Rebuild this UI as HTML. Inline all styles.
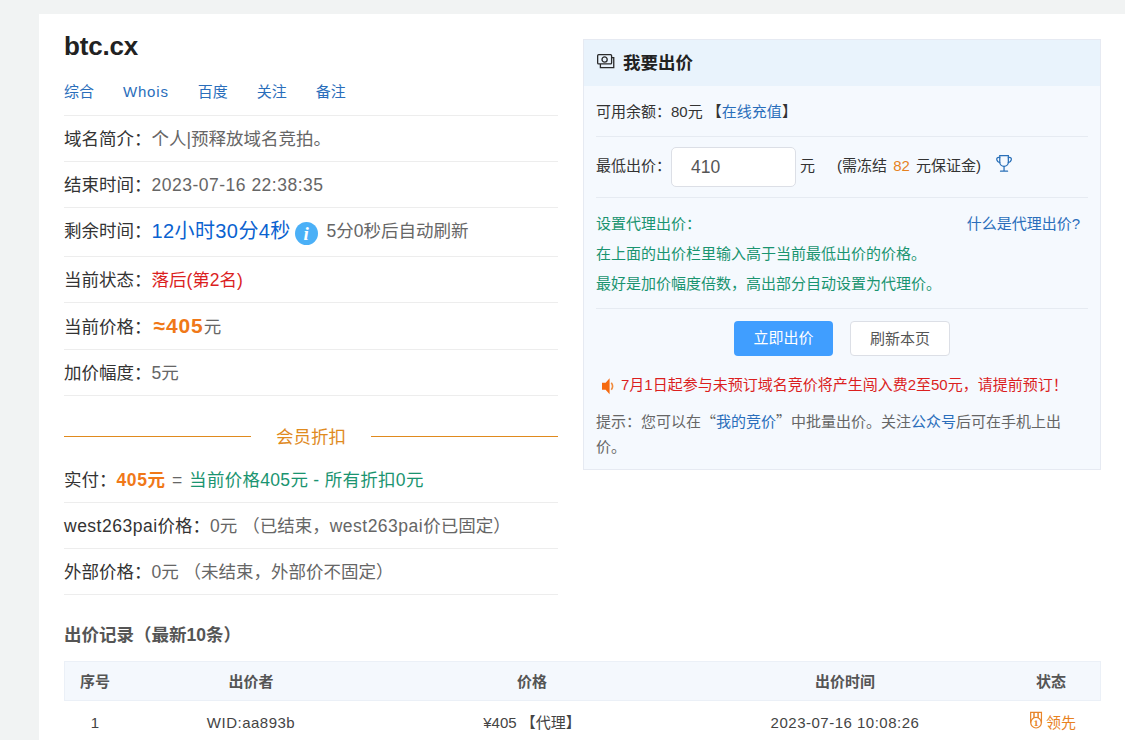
<!DOCTYPE html>
<html lang="zh-CN">
<head>
<meta charset="utf-8">
<title>btc.cx</title>
<style>
*{box-sizing:border-box;margin:0;padding:0}
html,body{width:1125px;height:740px;overflow:hidden;background:#f1f3f3}
body{font-family:"Liberation Sans","Noto Sans CJK SC",sans-serif;color:#333;position:relative}
a{color:#2a6ebb;text-decoration:none}
.wrap{position:absolute;left:39px;top:14px;width:1100px;height:740px;background:#fff}
.left{position:absolute;left:25px;top:0;width:494px}
h1{font-size:26px;font-weight:bold;color:#222;height:63px;line-height:65px;letter-spacing:-0.2px}
.links{height:39px;font-size:15px;line-height:30px;border-bottom:1px solid #ededed}
.links a{margin-right:29px}
.links a.w{letter-spacing:0.8px}
.n{letter-spacing:0.5px}
.row{height:46px;line-height:47px;font-size:17.5px;border-bottom:1px solid #ededed;color:#666;white-space:nowrap}
.row b{font-weight:normal;color:#333}
.row.t{height:49px;line-height:44px}
.row.h47{height:47px;padding-top:1px}
.blue{color:#0a62d0;font-size:20px;letter-spacing:0.4px;position:relative;top:1px}
.red{color:#db1f1f}
.org{color:#f07818;font-weight:bold;letter-spacing:0.6px}
.org.big{font-size:21px;letter-spacing:0.9px;position:relative;top:0;margin-left:2px;line-height:20px}
.grn{color:#1a9470}
.row .grn{letter-spacing:0.3px;margin-left:2px}
.row .eq{margin-left:1.500px}
.info{display:inline-block;width:23px;height:23px;border-radius:50%;background:#4bb0f7;vertical-align:-7.500px;margin:0 4px 0 -1px;position:relative}
.sep{height:61px;position:relative;text-align:center;color:#e08a1e;font-size:17.5px;line-height:82px}
.sep:before,.sep:after{content:"";position:absolute;top:40px;height:1px;background:#e08a1e;width:187px}
.sep:before{left:0}.sep:after{right:0}
.panel{position:absolute;left:544px;top:25px;width:518px;height:431px;background:#f5f9fe;border:1px solid #e6eaf2;font-size:15px}
.ph{position:absolute;left:0;top:0;right:0;height:46px;background:#e9f3fc;line-height:47px;font-size:17.5px;font-weight:bold;color:#222;padding-left:39px}
.panel .a{position:absolute;white-space:nowrap;line-height:20px}
.q{font-family:"Noto Sans CJK SC",sans-serif}
.hr{position:absolute;left:12px;width:492px;height:1px;background:#e6ebf2}
.inp{position:absolute;left:87px;top:107px;width:125px;height:40px;border:1px solid #dcdfe6;border-radius:5px;background:#fff;font-size:17.5px;color:#555;line-height:38px;padding-left:19px}
.btn{position:absolute;top:281px;width:99px;height:35px;border-radius:4px;text-align:center;line-height:34px;font-size:15px}
.b1{left:150px;background:#409eff;color:#fff}
.b2{left:266px;width:100px;background:#fff;border:1px solid #dcdfe6;color:#555}
.h2{position:absolute;left:25px;top:609px;font-size:17.5px;font-weight:bold;color:#555;line-height:24px}
.tb{position:absolute;left:25px;top:647px;width:1037px;font-size:15px}
.tb .hd{position:absolute;left:0;top:0;width:1037px;height:40px;background:#f4f8fd;border:1px solid #ebf0f7}
.tb span{position:absolute;white-space:nowrap;transform:translateX(-50%);line-height:20px}
.tb .h{font-weight:bold;color:#555;top:11px}
.tb .d{color:#444;top:51.500px}
svg{position:absolute;overflow:visible}
</style>
</head>
<body>
<div class="wrap">
 <div class="left">
  <h1>btc.cx</h1>
  <div class="links"><a>综合</a><a class="w">Whois</a><a>百度</a><a>关注</a><a>备注</a></div>
  <div class="row"><b>域名简介：</b>个人|预释放域名竞拍。</div>
  <div class="row"><b>结束时间：</b><span class="n">2023-07-16 22:38:35</span></div>
  <div class="row t"><b>剩余时间：</b><span class="blue">12小时30分4秒</span> <i class="info"><svg width="22" height="22" viewBox="0 0 22 22" style="left:0;top:0"><text x="11.200" y="18" text-anchor="middle" font-family="Liberation Serif,serif" font-style="italic" font-weight="bold" font-size="19" fill="#fff">i</text></svg></i> 5分0秒后自动刷新</div>
  <div class="row"><b>当前状态：</b><span class="red">落后(第2名)</span></div>
  <div class="row h47"><b>当前价格：</b><span class="org big">≈405</span>元</div>
  <div class="row"><b>加价幅度：</b>5元</div>
  <div class="sep">会员折扣</div>
  <div class="row"><b>实付：</b><span class="org">405元</span> <span class="eq">=</span> <span class="grn">当前价格405元 - 所有折扣0元</span></div>
  <div class="row"><b><span class="n">west263pai</span>价格：</b>0元 （已结束，<span class="n">west263pai</span>价已固定）</div>
  <div class="row"><b>外部价格：</b>0元 （未结束，外部价不固定）</div>
 </div>
 <div class="panel">
  <div class="ph">我要出价</div>
  <svg width="19" height="16" viewBox="0 0 19 16" style="left:13.300px;top:13.700px" fill="none" stroke="#2a2a2a" stroke-width="1.300"><rect x="0.650" y="0.650" width="13.950" height="9.250" rx="1"/><circle cx="7.600" cy="5.500" r="2.600"/><path d="M3.400 9.900V13.600H16.750V3.700H14.600"/></svg>
  <div class="a" style="left:12px;top:62px">可用余额：80元 【<a>在线充值</a>】</div>
  <div class="hr" style="top:96px"></div>
  <div class="a" style="left:12px;top:116px">最低出价：</div>
  <div class="inp">410</div>
  <div class="a" style="left:216px;top:116px">元</div>
  <div class="a" style="left:253px;top:116px;word-spacing:2px">(需冻结 <span style="color:#e6821e">82</span> 元保证金)</div>
  <svg width="16.400" height="17" viewBox="0 0 17 17" preserveAspectRatio="none" style="left:412px;top:115px" fill="none" stroke="#2a70b8" stroke-width="1.3" stroke-linecap="round"><path d="M3.9 0.7h8.9v6.2a4.45 4.45 0 0 1-8.9 0z"/><path d="M3.9 2.6c-2.6-.6-3.6.6-3 2.4.4 1.4 1.500 2.300 3 2.600M12.800 2.600c2.600-.6 3.600.6 3 2.400-.4 1.400-1.500 2.300-3 2.600"/><path d="M8.350 11.400v4.800M4.700 16.200h7.300"/></svg>
  <div class="hr" style="top:157px"></div>
  <div class="a grn" style="left:12px;top:174px">设置代理出价：</div>
  <div class="a" style="right:20px;top:174px"><a>什么是代理出价?</a></div>
  <div class="a grn" style="left:12px;top:204px">在上面的出价栏里输入高于当前最低出价的价格。</div>
  <div class="a grn" style="left:12px;top:234px">最好是加价幅度倍数，高出部分自动设置为代理价。</div>
  <div class="hr" style="top:268px"></div>
  <div class="btn b1">立即出价</div>
  <div class="btn b2">刷新本页</div>
  <svg width="13" height="17" viewBox="0 0 13 17" style="left:17.500px;top:337.500px"><path d="M0 4.800h3.600L7.600 0.300v16L3.600 11.800H0z" fill="#f56a10"/><path d="M9.300 4.800q2.600 3.500 0 7" fill="none" stroke="#f08a3c" stroke-width="1.600"/></svg>
  <div class="a red" style="left:37px;top:335px">7月1日起参与未预订域名竞价将产生闯入费2至50元，请提前预订！</div>
  <div class="a" style="left:12px;top:368px;line-height:25px;color:#666">提示：您可以在<span class="q">“</span><a>我的竞价</a><span class="q">”</span>中批量出价。关注<a>公众号</a>后可在手机上出<br>价。</div>
 </div>
 <div class="h2">出价记录（最新10条）</div>
 <div class="tb">
  <div class="hd"></div>
  <span class="h" style="left:31px">序号</span><span class="h" style="left:187px">出价者</span><span class="h" style="left:468px">价格</span><span class="h" style="left:781px">出价时间</span><span class="h" style="left:987px">状态</span>
  <span class="d" style="left:31px">1</span><span class="d n" style="left:187px">WID:aa893b</span><span class="d" style="left:468px">¥405 【代理】</span><span class="d n" style="left:781px">2023-07-16 10:08:26</span>
  <svg width="13" height="18" viewBox="0 0 13 18" style="left:966.100px;top:49.800px" fill="none" stroke="#e8852a" stroke-width="1.200"><path d="M0.650 11.700V1.350H11.450V11.700"/><path d="M4 1.350V6.900M8.100 1.350V6.900" stroke-width="1.500"/><circle cx="6.050" cy="11.700" r="5.300"/><text x="6.050" y="14.900" text-anchor="middle" font-family="DejaVu Serif,serif" font-size="7.500" font-weight="bold" fill="#e8852a" stroke="none">1</text></svg>
  <span class="d" style="left:997px;color:#e8821e">领先</span>
 </div>
</div>
</body>
</html>
